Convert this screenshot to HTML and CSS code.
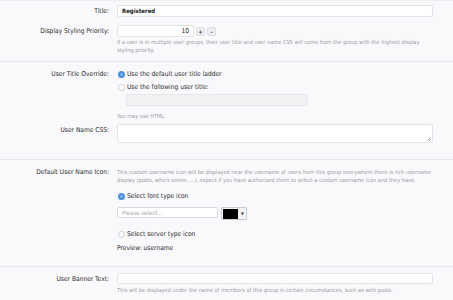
FILE: index.html
```html
<!DOCTYPE html>
<html lang="en">
<head>
  <meta charset="UTF-8">
  <title>User Group</title>
  <link rel="stylesheet" href="styles.css">
</head>
<body>

<div class="form">
  <div class="section first">
    <div class="row">
      <div class="label mid">Title:</div>
      <div class="field">
        <div class="input wide bold">Registered</div>
      </div>
    </div>
    <div class="row gap8">
      <div class="label mid">Display Styling Priority:</div>
      <div class="field">
        <div class="spin">
          <div class="input number">10</div>
          <span class="spin-btn">+</span>
          <span class="spin-btn">-</span>
        </div>
        <p class="hint">If a user is in multiple user groups, their user title and user name CSS will come from the group with the highest display styling priority.</p>
      </div>
    </div>
  </div>

  <div class="section second">
    <div class="row">
      <div class="label radio-label">User Title Override:</div>
      <div class="field">
        <label class="radio"><span class="dot on"></span>Use the default user title ladder</label>
        <label class="radio r2"><span class="dot"></span>Use the following user title:</label>
        <div class="input disabled"></div>
        <p class="hint html-hint">You may use HTML</p>
      </div>
    </div>
    <div class="row css-row">
      <div class="label top">User Name CSS:</div>
      <div class="field">
        <div class="textarea"><span class="grip"></span></div>
      </div>
    </div>
  </div>

  <div class="section third">
    <div class="row">
      <div class="label radio-label">Default User Name Icon:</div>
      <div class="field">
        <p class="hint">This custom username icon will be displayed near the username of users from this group everywhere there is rich username display (posts, who's online, ...), expect if you have authorized them to select a custom username icon and they have.</p>
        <label class="radio font-type"><span class="dot on"></span>Select font type icon</label>
        <div class="icon-pick">
          <div class="input select">Please select...</div>
          <div class="swatch"><span class="swatch-color"></span><span class="caret">▼</span></div>
        </div>
        <label class="radio server-type"><span class="dot"></span>Select server type icon</label>
        <div class="preview">Preview: username</div>
      </div>
    </div>
  </div>

  <div class="section fourth">
    <div class="row">
      <div class="label mid">User Banner Text:</div>
      <div class="field">
        <div class="input wide short"></div>
      </div>
    </div>
    <div class="row">
      <div class="label"></div>
      <div class="field">
        <p class="hint">This will be displayed under the name of members of this group in certain circumstances, such as with posts.</p>
      </div>
    </div>
  </div>
</div>

</body>
</html>
```

FILE: styles.css
```css
body {
  margin: 0;
  background: #f9f9fb;
  font-family: "DejaVu Sans Condensed", "DejaVu Sans", sans-serif;
  font-size: 6.6px;
  color: #333;
  border-top: 1px solid #eceef2;
}

.form {
  width: 453px;
}

.section {
  border-bottom: 1px solid #e6e8ed;
}

.section.first {
  padding: 4px 0 7px;
}

.section.second {
  padding: 7px 0 16px;
}

.section.third {
  padding: 7px 0 13px;
}

.section.fourth {
  border-bottom: none;
  padding-top: 6px;
}

.row {
  display: flex;
}

.gap8 {
  margin-top: 8px;
}

.label {
  width: 109px;
  flex-shrink: 0;
  text-align: right;
  line-height: 10px;
  color: #2a2a2a;
}

.label.mid {
  line-height: 12px;
}

.label.top {
  padding-top: 1px;
}

.field {
  margin-left: 8px;
  width: 316px;
}

.input {
  box-sizing: border-box;
  height: 12px;
  background: #fff;
  border: 1px solid #e3e4e8;
  border-radius: 2px;
  line-height: 10px;
  padding: 0 4px;
  font-size: 6px;
  color: #222;
}

.input.wide {
  width: 316px;
}

.input.short {
  height: 11px;
}

.bold {
  font-weight: bold;
}

.spin {
  display: flex;
  align-items: center;
  gap: 2px;
}

.input.number {
  width: 77px;
  text-align: right;
  font-size: 6.6px;
}

.spin-btn {
  box-sizing: border-box;
  width: 9px;
  height: 9px;
  border: 1px solid #dcdee3;
  border-radius: 2px;
  background: #eceef2;
  font-size: 6px;
  line-height: 7px;
  text-align: center;
  font-weight: bold;
  color: #555;
}

.hint {
  margin: 1px 0 0;
  font-size: 5.6px;
  line-height: 8px;
  color: #9a9ca3;
}

.radio {
  display: flex;
  align-items: center;
  gap: 2px;
  line-height: 10px;
  color: #2a2a2a;
}

.r2 {
  margin-top: 3px;
}

.dot {
  box-sizing: border-box;
  width: 7px;
  height: 7px;
  border-radius: 50%;
  border: 1px solid #c9ccd2;
  background: #fff;
  margin-left: 1px;
}

.dot.on {
  border: 2px solid #4a90e2;
  background: #fff;
  box-shadow: inset 0 0 0 1px #4a90e2;
}

.input.disabled {
  width: 182px;
  margin: 2px 0 0 9px;
  background: #f1f1f3;
  border-color: #e6e7ea;
}

.html-hint {
  margin-top: 6px;
}

.css-row {
  margin-top: 4px;
}

.textarea {
  position: relative;
  box-sizing: border-box;
  width: 316px;
  height: 19px;
  background: #fff;
  border: 1px solid #e3e4e8;
  border-radius: 2px;
}

.grip {
  position: absolute;
  right: 1px;
  bottom: 1px;
  width: 4px;
  height: 4px;
  background: linear-gradient(135deg, transparent 50%, #b5b7bd 50%, #b5b7bd 60%, transparent 60%, transparent 75%, #b5b7bd 75%, #b5b7bd 85%, transparent 85%);
}

.font-type {
  margin-top: 7px;
}

.icon-pick {
  display: flex;
  gap: 3px;
  margin-top: 6px;
}

.input.select {
  width: 101px;
  height: 11px;
  line-height: 9px;
  color: #a5a7ad;
  font-size: 6px;
  border-color: #d8d9de;
}

.swatch {
  box-sizing: border-box;
  display: flex;
  align-items: center;
  gap: 3px;
  width: 26px;
  height: 13px;
  padding: 1px;
  background: #f4f4f6;
  border: 1px solid #c9cbd0;
  border-radius: 1px;
}

.swatch-color {
  width: 15px;
  height: 10px;
  background: #000;
}

.caret {
  font-size: 4px;
  color: #333;
}

.server-type {
  margin-top: 9px;
}

.preview {
  margin-top: 4px;
  line-height: 10px;
  color: #2a2a2a;
}
```
